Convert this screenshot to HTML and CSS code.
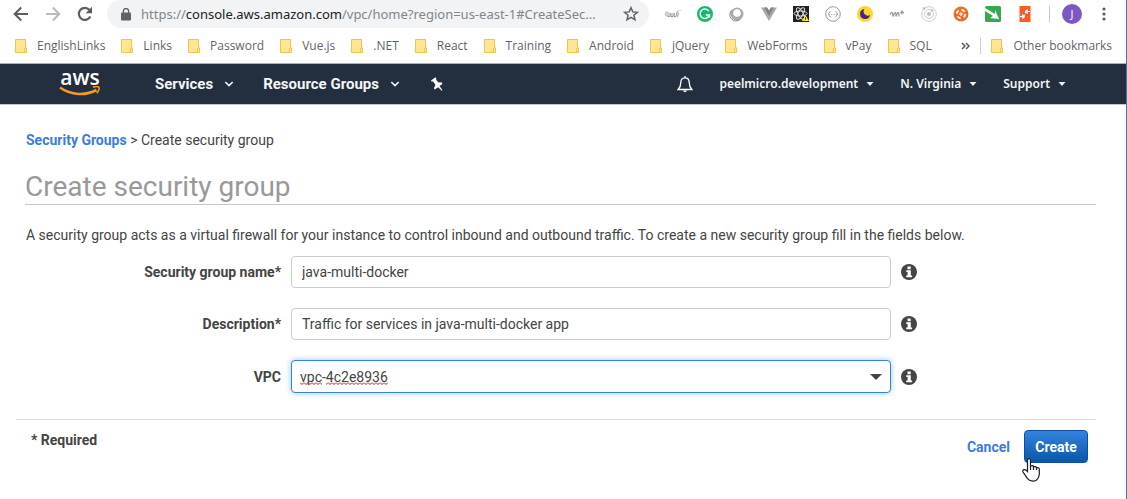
FILE: index.html
```
<!DOCTYPE html>
<html lang="en">
<head>
<meta charset="utf-8">
<meta name="viewport" content="width=device-width, initial-scale=1">
<title>Create security group</title>
<link rel="stylesheet" href="styles.css">
</head>
<body>
<svg class="defs" aria-hidden="true">
  <symbol id="folder" viewBox="0 0 12 14"><path d="M.5.5h10v8.200h1v4.800H.5z" fill="#ffe692" stroke="#e9c64e"/><path d="M9.500 13.500V9.500h1" fill="none" stroke="#e9c64e"/></symbol>
  <symbol id="chevron" viewBox="0 0 10 6"><path d="M1.300 1l3.700 3.500L8.700 1" fill="none" stroke="#f2f2f2" stroke-width="1.700"/></symbol>
  <symbol id="caret" viewBox="0 0 8 4"><path d="M.5 0h7L4 4z" fill="#eee"/></symbol>
  <symbol id="info" viewBox="0 0 16 16"><circle cx="8" cy="8" r="8" fill="#444"/><path d="M6.500 2.500h3.200v2.800H6.500zM5.300 6.300h4.500v5.200h1.300v1.700H5.200v-1.700h1.400V8H5.300z" fill="#fff"/></symbol>
</svg>
<div class="window">
  <header class="browser">
    <div class="toolbar">
      <button class="tool" aria-label="Back"><svg width="16" height="16" viewBox="0 0 16 16" fill="none" stroke="#5a5d61" stroke-width="2"><path d="M15 8H2.500M8.200 1.500L1.700 8l6.500 6.500"/></svg></button>
      <button class="tool" aria-label="Forward"><svg width="16" height="16" viewBox="0 0 16 16" fill="none" stroke="#b9babc" stroke-width="2"><path d="M1 8h12.500M7.800 1.500L14.300 8l-6.500 6.500"/></svg></button>
      <button class="tool" aria-label="Reload"><svg width="16" height="16" viewBox="0 0 16 16"><path d="M13.300 10.500A6 6 0 1 1 12.500 4" fill="none" stroke="#5a5d61" stroke-width="2.200"/><path d="M15 .8v6.400H8.600z" fill="#5a5d61"/></svg></button>
      <div class="address">
        <svg width="10" height="13" viewBox="0 0 10 13"><rect y="4.500" width="10" height="8" rx="1" fill="#5f6368"/><path d="M2.400 5V3.200a2.600 2.600 0 0 1 5.200 0V5" fill="none" stroke="#5f6368" stroke-width="1.300"/></svg>
        <span class="url">https://<b>console.aws.amazon.com</b>/vpc/home?region=us-east-1#CreateSec...</span>
        <button class="tool" aria-label="Bookmark"><svg width="16" height="16" viewBox="0 0 16 16"><path d="M8 1.700l1.800 4.200 4.600.4-3.500 3 1.100 4.500L8 11.400l-4 2.400 1.100-4.500-3.500-3 4.600-.4z" fill="none" stroke="#5f6368" stroke-width="1.500"/></svg></button>
      </div>
      <div class="extensions">
        <svg viewBox="0 0 16 16" fill="none" stroke="#999"><path d="M2 5.500C.3 7 .3 9.500 2.300 10.500M3 6v4.500h2V7M6 7v3.500h2V7M9.500 7l-.5 3.500h2L12 6l1.500-1M13.500 6.500L12.500 11M14.500 4.500h1"/></svg>
        <svg viewBox="0 0 16 16"><circle cx="8" cy="8" r="8" fill="#19b871"/><path d="M11.700 5A4.700 4.700 0 1 0 12.400 9H8.800M12.500 8.500v3" fill="none" stroke="#fff" stroke-width="1.500"/></svg>
        <svg viewBox="0 0 16 16"><circle cx="8" cy="8" r="6.500" fill="#aaa"/><circle cx="8" cy="7" r="3.800" fill="#fff"/><path d="M3 4a6 6 0 0 0 8 9.500" fill="none" stroke="#888"/></svg>
        <svg viewBox="0 0 16 16"><path d="M0 1.500h6l2 3 2-3h6L8 15z" fill="#aaa"/><path d="M3 1.500h3l2 3 2-3h3L8 10z" fill="#858585"/></svg>
        <svg viewBox="0 0 16 16"><path d="M0 0h16v16H0z" fill="#222"/><g fill="none" stroke="#ddd"><ellipse cx="7.500" cy="7.500" rx="6.500" ry="2.500"/><ellipse cx="7.500" cy="7.500" rx="6.500" ry="2.500" transform="rotate(60 7.500 7.500)"/><ellipse cx="7.500" cy="7.500" rx="6.500" ry="2.500" transform="rotate(120 7.500 7.500)"/></g><path d="M12.500 9l3.500 6H9z" fill="#ffe32e"/><path d="M12.500 11v3" stroke="#6b5a00"/></svg>
        <svg viewBox="0 0 16 16" fill="none" stroke="#999"><circle cx="8" cy="8" r="7.300"/><path d="M5.500 5.500q-1.200 0-1.200 1.200T3.200 8q1.100 0 1.100 1.300t1.200 1.200M10.500 5.500q1.200 0 1.200 1.200T12.800 8q-1.100 0-1.100 1.300t-1.200 1.200M6.200 8.500h1M8.700 8.500h1"/></svg>
        <svg viewBox="0 0 16 16"><circle cx="8" cy="8" r="8" fill="#fbd630"/><path d="M7.600 3A5 5 0 1 0 13 8.800 4 4 0 0 1 7.600 3z" fill="#45257c"/></svg>
        <svg viewBox="0 0 16 16" fill="none" stroke="#999" stroke-width="1.300"><path d="M1 8.500c.5-2 2-3 2.500-1l.5 3c1.500-5 3-5.500 3 0 1.500-5 3-5.500 3 0M11 6.500h4M13 4.500v4"/></svg>
        <svg viewBox="0 0 16 16" fill="none" stroke="#ccc"><circle cx="8" cy="8" r="7.300"/><circle cx="8" cy="8" r="4.500"/><circle cx="8" cy="8" r="1.800" fill="#bbb"/><circle cx="3" cy="2.500" r="1" fill="#aaa"/><circle cx="11" cy="4.500" r="1" fill="#aaa"/></svg>
        <svg viewBox="0 0 16 16"><circle cx="8" cy="8" r="7.500" fill="#f36b21"/><circle cx="8" cy="8" r="4.200" fill="none" stroke="#fff" stroke-width="2" stroke-dasharray="3.600 3"/><path d="M6 8h4M8 6v4" stroke="#fff"/></svg>
        <svg viewBox="0 0 16 16"><rect width="16" height="16" rx="1.500" fill="#36a853"/><path d="M0 2l10 6V4l4 9-9-1 3-2L0 5z" fill="#fff"/></svg>
        <svg viewBox="0 0 16 16"><path d="M2.500 0h11v16h-11z" fill="#fa5a28"/><path d="M3 10.500h3M13 5.500h-3M5.500 8.500L8 10.500l-2.500 2zM10.500 3.500L8 5.500l2.500 2zM7.500 10.500V8.500M8.500 5.500v2" fill="#fff" stroke="#fff"/></svg>
      </div>
      <span class="divider"></span>
      <button class="avatar">J</button>
      <button class="tool" aria-label="Menu"><svg width="4" height="14" viewBox="0 0 4 14" fill="#5a5d61"><circle cx="2" cy="2" r="1.600"/><circle cx="2" cy="7" r="1.600"/><circle cx="2" cy="12" r="1.600"/></svg></button>
    </div>
    <nav class="bookmarks" aria-label="Bookmarks">
      <a href="#"><svg><use href="#folder"/></svg>EnglishLinks</a>
      <a href="#"><svg><use href="#folder"/></svg>Links</a>
      <a href="#"><svg><use href="#folder"/></svg>Password</a>
      <a href="#"><svg><use href="#folder"/></svg>Vue.js</a>
      <a href="#"><svg><use href="#folder"/></svg>.NET</a>
      <a href="#"><svg><use href="#folder"/></svg>React</a>
      <a href="#"><svg><use href="#folder"/></svg>Training</a>
      <a href="#"><svg><use href="#folder"/></svg>Android</a>
      <a href="#"><svg><use href="#folder"/></svg>jQuery</a>
      <a href="#"><svg><use href="#folder"/></svg>WebForms</a>
      <a href="#"><svg><use href="#folder"/></svg>vPay</a>
      <a href="#"><svg><use href="#folder"/></svg>SQL</a>
      <div class="overflow">
        <button class="tool" aria-label="More bookmarks"><svg width="9" height="8" viewBox="0 0 9 8" fill="none" stroke="#55585c" stroke-width="1.500"><path d="M1 1l3 3-3 3M5 1l3 3-3 3"/></svg></button>
        <span class="divider"></span>
        <a href="#"><svg><use href="#folder"/></svg>Other bookmarks</a>
      </div>
    </nav>
  </header>
  <nav class="console" aria-label="Console">
    <a class="aws" href="#" aria-label="AWS home"><span>aws</span><svg width="42" height="10" viewBox="0 0 42 10" fill="none" stroke="#f79a1e"><path d="M1 1.500C12 9.500 27 9.800 37.500 4" stroke-width="2.600"/><path d="M34 1.300c3-1 5.500-.8 6 .2s-.5 3.500-2.200 5.700" stroke-width="1.600"/></svg></a>
    <button class="menu">Services<svg width="10" height="6"><use href="#chevron"/></svg></button>
    <button class="menu groups">Resource Groups<svg width="10" height="6"><use href="#chevron"/></svg></button>
    <button class="tool pin" aria-label="Pin"><svg width="14" height="14" viewBox="0 0 14 14"><path d="M1 3.500L5.500.3l1 1.700-.5.800 2.500 2.700 3-.3 1 1.700-3 2.100 3 4.300-.700.500-3.600-3.500-3.500 2.300-.8-1.600 1.600-3L3 4.300l-1.200.4z" fill="#fff"/></svg></button>
    <div class="account">
      <button class="tool" aria-label="Notifications"><svg width="16" height="17" viewBox="0 0 16 17"><path d="M8 1.800C5 1.800 3.800 4 3.800 6.500c0 3.500-.8 5-2.600 7h13.600c-1.800-2-2.600-3.500-2.600-7C12.200 4 11 1.800 8 1.800zM8 0v2" fill="none" stroke="#fff" stroke-width="1.300"/><path d="M5.800 14.500h4.400Q8 18 5.800 14.500z" fill="#fff"/></svg></button>
      <button class="menu">peelmicro.development<svg width="8" height="4"><use href="#caret"/></svg></button>
      <button class="menu">N. Virginia<svg width="8" height="4"><use href="#caret"/></svg></button>
      <button class="menu">Support<svg width="8" height="4"><use href="#caret"/></svg></button>
    </div>
  </nav>
  <main class="page">
    <p class="crumbs"><a href="#">Security Groups</a> &gt; Create security group</p>
    <h1>Create security group</h1>
    <p class="intro">A security group acts as a virtual firewall for your instance to control inbound and outbound traffic. To create a new security group fill in the fields below.</p>
    <form class="form">
      <div class="row">
        <label for="name">Security group name*</label>
        <input id="name" type="text" value="java-multi-docker">
        <button type="button" class="tool" aria-label="About name"><svg width="16" height="16"><use href="#info"/></svg></button>
      </div>
      <div class="row">
        <label for="desc">Description*</label>
        <input id="desc" type="text" value="Traffic for services in java-multi-docker app">
        <button type="button" class="tool" aria-label="About description"><svg width="16" height="16"><use href="#info"/></svg></button>
      </div>
      <div class="row">
        <label for="vpc">VPC</label>
        <div class="combo">
          <input id="vpc" type="text" role="combobox" aria-expanded="false" value="vpc-4c2e8936">
          <svg class="squiggle" width="88" height="3" viewBox="0 0 88 3"><defs><pattern id="wave" width="4" height="3" patternUnits="userSpaceOnUse"><path d="M0 .5L2 2.500 4 .5" fill="none" stroke="#f00"/></pattern></defs><path d="M0 0h22v3H0zM26 0h62v3H26z" fill="url(#wave)"/></svg>
          <button type="button" class="tool" aria-label="Show VPCs"><svg width="12" height="6" viewBox="0 0 12 6"><path d="M0 0h12L6 6z" fill="#444"/></svg></button>
        </div>
        <button type="button" class="tool" aria-label="About VPC"><svg width="16" height="16"><use href="#info"/></svg></button>
      </div>
      <footer class="actions">
        <span class="required">* Required</span>
        <a href="#">Cancel</a>
        <div class="submit">
          <button type="submit">Create</button>
          <svg class="pointer" width="18" height="24" viewBox="0 0 18 24"><path d="M5.500 13.500V2.500Q5.500.7 7 .7t1.500 1.800v5.500q2.800-1 3 .8 2.500-.8 3 .8 2.700-.3 2.800 1.400v5q0 3-2.300 5.700-1 1.500-4 1.500-3.500 0-5.500-2.500Q3 17 1 14q-.7-2 1-2.300Q4 11.500 5.500 13.500z" fill="#fff" stroke="#1a1a2a" stroke-width="1.200"/><path d="M8.500 8v4M11.500 8.500v3.500M14.500 9.500V12" stroke="#1a1a2a" stroke-width="1.200"/></svg>
        </div>
      </footer>
    </form>
  </main>
</div>
</body>
</html>
```
FILE: styles.css
```
* { box-sizing: border-box; }
body { margin: 0; background: #fff; color: #444; font: 14px/20px Roboto, sans-serif; }
button { padding: 0; border: 0; background: none; color: inherit; font: inherit; cursor: pointer; }
a { color: #3b7ddd; text-decoration: none; }
p { margin: 0; }
svg { display: block; flex: none; }
.defs { position: absolute; width: 0; height: 0; }
.tool { display: flex; align-items: center; justify-content: center; flex: none; }
.divider { width: 1px; height: 16px; background: #c8cacd; flex: none; }

.window { min-height: 100vh; border-right: 1px solid #1a84d8; }

.browser { border-bottom: 1px solid #b0b0b0; font-family: "Open Sans", "Noto Sans", sans-serif; color: #5f6368; }
.toolbar { display: flex; align-items: center; height: 28px; padding: 0 20px 0 13px; }
.toolbar > .tool { margin-right: 16px; }
.toolbar > .tool:last-child { margin: 0; }
.address { display: flex; align-items: center; flex: 1; height: 28px; margin-left: -2px; padding: 0 10px 0 14px; border-radius: 14px; background: #f1f3f4; min-width: 0; }
.url { flex: 1; min-width: 0; margin-left: 10px; white-space: nowrap; font-family: "Noto Sans", sans-serif; font-size: 13px; color: #80868b; }
.url b { font-weight: 400; color: #202124; }
.extensions { display: flex; gap: 16px; margin: 0 16px 0 16px; }
.extensions svg { width: 16px; height: 16px; }
.avatar { width: 20px; height: 20px; margin: 0 20px 0 12px; border-radius: 50%; background: #7e57c2; color: #fff; font-size: 11px; line-height: 20px; }

.bookmarks { display: flex; align-items: center; gap: 16px; height: 35px; padding: 0 14px 0 15px; font-size: 12px; }
.bookmarks a { display: flex; align-items: center; gap: 10px; color: #5f6368; white-space: nowrap; }
.bookmarks a svg { width: 12px; height: 14px; }
.overflow { display: flex; align-items: center; gap: 10px; margin-left: auto; }

.console { display: flex; align-items: center; height: 41px; padding: 0 60px 0 59px; border-bottom: 1px solid #c8c8c8; background: #232f3e; color: #f5f5f5; }
.aws { display: flex; flex-direction: column; align-items: center; width: 42px; margin-right: 54px; color: #fff; font: 600 21px/18px "Open Sans", sans-serif; }
.aws span { margin-top: -4px; }
.menu { display: flex; align-items: center; gap: 11px; white-space: nowrap; font-size: 15px; font-weight: 700; }
.groups { margin: 0 30px 0 29px; }
.account { display: flex; align-items: center; gap: 26px; margin-left: auto; }
.account .menu { gap: 8px; font: 600 12px/20px "Noto Sans", sans-serif; }

.page { padding: 25px 30px 0 25px; }
.crumbs a, .actions a { font-weight: 700; }
.crumbs, .intro { padding-left: 1px; }
h1 { margin: 20px 0 20px; border-bottom: 1px solid #c8c8c8; color: #999; font-size: 28px; font-weight: 400; line-height: 34px; }
.form { display: grid; gap: 20px; margin-top: 11px; }
.row { display: grid; grid-template-columns: 256px minmax(0, 600px) 16px; column-gap: 10px; align-items: center; }
.row label { font-weight: 700; text-align: right; }
.row input { width: 100%; height: 32px; padding: 0 10px; border: 1px solid #ccc; border-radius: 4px; background: #fff; color: #444; font: inherit; outline: 0; }
.combo { position: relative; display: flex; }
.row .combo input { height: 33px; padding: 0 32px 0 8px; border-color: #3184dd; box-shadow: 0 0 6px #9cc8f5; }
.combo .tool { position: absolute; top: 0; bottom: 0; right: 9px; }
.squiggle { position: absolute; left: 9px; top: 22px; }
.actions { display: flex; align-items: center; gap: 14px; margin: 6px 0 0 -9px; padding: 10px 8px 0 15px; border-top: 1px solid #ddd; }
.required { align-self: flex-start; margin-right: auto; font-weight: 700; }
.submit { position: relative; }
.submit button { width: 64px; height: 33px; border: 1px solid #0d4f9e; border-radius: 4px; background: linear-gradient(#3184dd, #0a56ab); color: #fff; font-weight: 700; }
.pointer { position: absolute; left: -2px; top: 28px; }
```
